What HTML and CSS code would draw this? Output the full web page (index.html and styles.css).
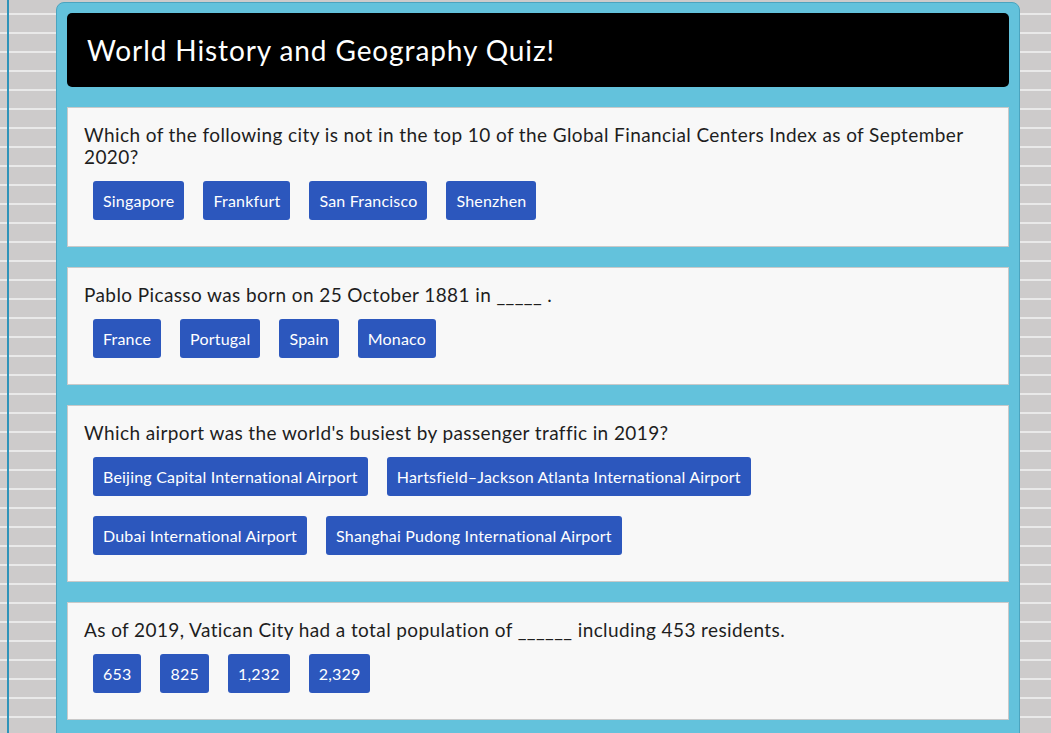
FILE: index.html
```html
<!DOCTYPE html>
<html lang="en">
<head>
<meta charset="utf-8">
<title>World History and Geography Quiz!</title>
<link rel="stylesheet" href="styles.css">
</head>
<body>
<div class="quiz">
  <header class="quiz-header"><h1>World History and Geography Quiz!</h1></header>

  <section class="card">
    <p class="question">Which of the following city is not in the top 10 of the Global Financial Centers Index as of September 2020?</p>
    <div class="answers">
      <button class="answer">Singapore</button>
      <button class="answer">Frankfurt</button>
      <button class="answer">San Francisco</button>
      <button class="answer">Shenzhen</button>
    </div>
  </section>

  <section class="card">
    <p class="question">Pablo Picasso was born on 25 October 1881 in _____ .</p>
    <div class="answers">
      <button class="answer">France</button>
      <button class="answer">Portugal</button>
      <button class="answer">Spain</button>
      <button class="answer">Monaco</button>
    </div>
  </section>

  <section class="card">
    <p class="question">Which airport was the world's busiest by passenger traffic in 2019?</p>
    <div class="answers">
      <button class="answer">Beijing Capital International Airport</button>
      <button class="answer">Hartsfield–Jackson Atlanta International Airport</button>
      <button class="answer">Dubai International Airport</button>
      <button class="answer">Shanghai Pudong International Airport</button>
    </div>
  </section>

  <section class="card">
    <p class="question">As of 2019, Vatican City had a total population of ______ including 453 residents.</p>
    <div class="answers">
      <button class="answer">653</button>
      <button class="answer">825</button>
      <button class="answer">1,232</button>
      <button class="answer">2,329</button>
    </div>
  </section>
</div>
</body>
</html>
```

FILE: styles.css
```css
* { box-sizing: border-box; }

html, body {
  margin: 0;
  padding: 0;
}

body {
  font-family: Lato, "Open Sans", sans-serif;
  color: #1e1e1e;
  background-color: #cdcbcb;
  background-image:
    linear-gradient(to right, transparent 7px, #2f93b9 7px, #2f93b9 9px, transparent 9px),
    repeating-linear-gradient(to bottom, #cdcbcb 0, #cdcbcb 13px, #e9e9e9 13px, #e9e9e9 15px, #cdcbcb 15px, #cdcbcb 19px);
  min-height: 733px;
  padding-top: 2px;
}

.quiz {
  margin-left: 56px;
  width: 964px;
  background: #63c2dc;
  border: 1px solid #4ba4bf;
  border-radius: 8px;
  padding: 10px 10px 1px 10px;
}

.quiz-header {
  background: #000;
  border-radius: 5px;
  height: 74px;
  padding: 0 20px;
  display: flex;
  align-items: center;
  margin-bottom: 20px;
}

.quiz-header h1 {
  margin: 0;
  color: #fff;
  font-size: 28px;
  font-weight: 400;
  letter-spacing: 0.9px;
}

.card {
  background: #f8f8f8;
  border: 1px solid #c9c9c9;
  padding: 16px;
  margin-bottom: 20px;
}

.question {
  margin: 0 0 3px 0;
  font-size: 19px;
  line-height: 22px;
  letter-spacing: 0.4px;
}

.answers {
  display: flex;
  flex-wrap: wrap;
}

.answer {
  font-family: inherit;
  font-size: 16px;
  line-height: 19px;
  letter-spacing: 0.2px;
  color: #fff;
  background: #2c57bd;
  border: none;
  border-radius: 3px;
  padding: 10px;
  margin: 10px 10px 10px 9px;
  cursor: pointer;
}
```
